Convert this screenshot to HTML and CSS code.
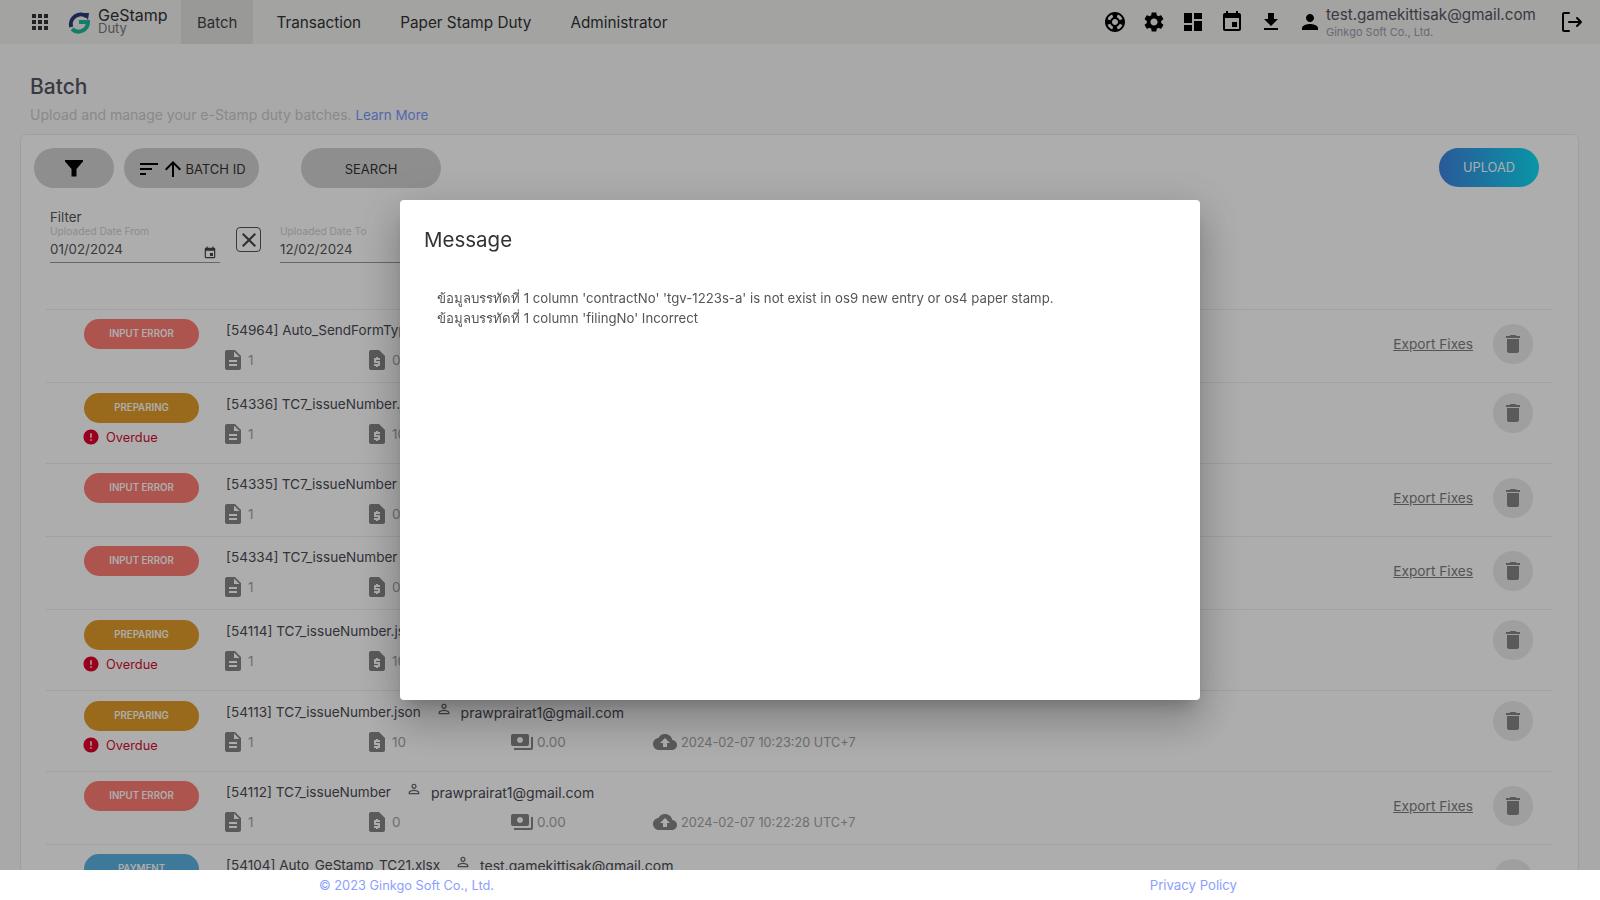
FILE: index.html
```html
<!DOCTYPE html>
<html lang="en">
<head>
  <meta charset="UTF-8">
  <meta name="viewport" content="width=device-width, initial-scale=1.0">
  <title>GeStamp Duty | Batch</title>
  <link rel="stylesheet" href="styles.css">
</head>
<body>
  <!-- material icon sprite -->
  <svg class="sprite" xmlns="http://www.w3.org/2000/svg">
    <symbol id="i-apps" viewBox="0 0 24 24"><path d="M4 8h4V4H4v4zm6 12h4v-4h-4v4zm-6 0h4v-4H4v4zm0-6h4v-4H4v4zm6 0h4v-4h-4v4zm6-10v4h4V4h-4zm-6 4h4V4h-4v4zm6 6h4v-4h-4v4zm0 6h4v-4h-4v4z"/></symbol>
    <symbol id="i-support" viewBox="0 0 24 24"><path d="M12 2C6.48 2 2 6.48 2 12s4.48 10 10 10 10-4.48 10-10S17.52 2 12 2zm7.46 7.12l-2.78 1.15c-.51-1.36-1.58-2.44-2.95-2.94l1.15-2.78c2.1.8 3.77 2.47 4.58 4.57zM12 15c-1.66 0-3-1.34-3-3s1.34-3 3-3 3 1.34 3 3-1.34 3-3 3zM9.13 4.54l1.17 2.78c-1.38.5-2.47 1.59-2.98 2.97L4.54 9.13c.81-2.11 2.48-3.78 4.59-4.59zM4.54 14.87l2.78-1.15c.51 1.38 1.59 2.46 2.97 2.96l-1.17 2.78c-2.1-.81-3.77-2.48-4.58-4.59zm10.34 4.59l-1.15-2.78c1.37-.51 2.45-1.59 2.95-2.97l2.78 1.17c-.81 2.1-2.48 3.77-4.58 4.58z"/></symbol>
    <symbol id="i-settings" viewBox="0 0 24 24"><path d="M19.14 12.94c.04-.3.06-.61.06-.94 0-.32-.02-.64-.07-.94l2.03-1.58c.18-.14.23-.41.12-.61l-1.92-3.32c-.12-.22-.37-.29-.59-.22l-2.39.96c-.5-.38-1.03-.7-1.62-.94l-.36-2.54c-.04-.24-.24-.41-.48-.41h-3.84c-.24 0-.43.17-.47.41l-.36 2.54c-.59.24-1.13.57-1.62.94l-2.39-.96c-.22-.08-.47 0-.59.22L2.74 8.87c-.12.21-.08.47.12.61l2.03 1.58c-.05.3-.09.63-.09.94s.02.64.07.94l-2.03 1.58c-.18.14-.23.41-.12.61l1.92 3.32c.12.22.37.29.59.22l2.39-.96c.5.38 1.03.7 1.62.94l.36 2.54c.05.24.24.41.48.41h3.84c.24 0 .44-.17.47-.41l.36-2.54c.59-.24 1.13-.56 1.62-.94l2.39.96c.22.08.47 0 .59-.22l1.92-3.32c.12-.22.07-.47-.12-.61l-2.01-1.58zM12 15.6c-1.98 0-3.6-1.62-3.6-3.6s1.62-3.6 3.6-3.6 3.6 1.62 3.6 3.6-1.62 3.6-3.6 3.6z"/></symbol>
    <symbol id="i-dashboard" viewBox="0 0 24 24"><path d="M3 13h8V3H3v10zm0 8h8v-6H3v6zm10 0h8V11h-8v10zm0-18v6h8V3h-8z"/></symbol>
    <symbol id="i-event" viewBox="0 0 24 24"><path d="M17 12h-5v5h5v-5zM16 1v2H8V1H6v2H5c-1.11 0-1.99.9-1.99 2L3 19c0 1.1.89 2 2 2h14c1.1 0 2-.9 2-2V5c0-1.1-.9-2-2-2h-1V1h-2zm3 18H5V8h14v11z"/></symbol>
    <symbol id="i-download" viewBox="0 0 24 24"><path d="M19 9h-4V3H9v6H5l7 7 7-7zM5 18v2h14v-2H5z"/></symbol>
    <symbol id="i-person" viewBox="0 0 24 24"><path d="M12 12c2.21 0 4-1.79 4-4s-1.79-4-4-4-4 1.79-4 4 1.79 4 4 4zm0 2c-2.67 0-8 1.34-8 4v2h16v-2c0-2.66-5.33-4-8-4z"/></symbol>
    <symbol id="i-person-outline" viewBox="0 0 24 24"><path d="M12 5.9c1.16 0 2.1.94 2.1 2.1s-.94 2.1-2.1 2.1S9.9 9.16 9.9 8s.94-2.1 2.1-2.1m0 9c2.97 0 6.1 1.46 6.1 2.1v1.1H5.9V17c0-.64 3.13-2.1 6.1-2.1M12 4C9.79 4 8 5.79 8 8s1.79 4 4 4 4-1.79 4-4-1.79-4-4-4zm0 9c-2.67 0-8 1.34-8 4v3h16v-3c0-2.66-5.33-4-8-4z"/></symbol>
    <symbol id="i-filter" viewBox="0 0 24 24"><path d="M3 4h18v1.5L14.5 13v7.5h-5V13L3 5.5z"/></symbol>
    <symbol id="i-sort" viewBox="0 0 24 24"><path d="M3 18h6v-2H3v2zM3 6v2h18V6H3zm0 7h12v-2H3v2z"/></symbol>
    <symbol id="i-arrow-up" viewBox="0 0 24 24"><path d="M4 12l1.41 1.41L11 7.83V20h2V7.83l5.58 5.59L20 12l-8-8-8 8z"/></symbol>
    <symbol id="i-close" viewBox="0 0 24 24"><path d="M19 6.41L17.59 5 12 10.59 6.41 5 5 6.41 10.59 12 5 17.59 6.41 19 12 13.41 17.59 19 19 17.59 13.41 12z"/></symbol>
    <symbol id="i-file" viewBox="0 0 24 24"><path d="M14 2H6c-1.1 0-1.99.9-1.99 2L4 20c0 1.1.89 2 1.99 2H18c1.1 0 2-.9 2-2V8l-6-6zm2 16H8v-2h8v2zm0-4H8v-2h8v2zm-3-5V3.5L18.5 9H13z"/></symbol>
    <symbol id="i-quote" viewBox="0 0 24 24"><path d="M14 2H6c-1.1 0-2 .9-2 2v16c0 1.1.9 2 2 2h12c1.1 0 2-.9 2-2V8l-6-6zm1 10h-4v1h3c.55 0 1 .45 1 1v3c0 .55-.45 1-1 1h-1v1h-2v-1H9v-2h4v-1h-3c-.55 0-1-.45-1-1v-3c0-.55.45-1 1-1h1V9h2v1h2v2z"/></symbol>
    <symbol id="i-payments" viewBox="0 0 24 24"><path d="M19 14V6c0-1.1-.9-2-2-2H3c-1.1 0-2 .9-2 2v8c0 1.1.9 2 2 2h14c1.1 0 2-.9 2-2zm-9-1c-1.66 0-3-1.34-3-3s1.34-3 3-3 3 1.34 3 3-1.34 3-3 3zm13-6v11c0 1.1-.9 2-2 2H4v-2h17V7h2z"/></symbol>
    <symbol id="i-cloud" viewBox="0 0 24 24"><path d="M19.35 10.04C18.67 6.59 15.64 4 12 4 9.11 4 6.6 5.64 5.35 8.04 2.34 8.36 0 10.91 0 14c0 3.31 2.69 6 6 6h13c2.76 0 5-2.24 5-5 0-2.64-2.05-4.78-4.65-4.96zM14 13v4h-4v-4H7l5-5 5 5h-3z"/></symbol>
    <symbol id="i-delete" viewBox="0 0 24 24"><path d="M6 19c0 1.1.9 2 2 2h8c1.1 0 2-.9 2-2V7H6v12zM19 4h-3.5l-1-1h-5l-1 1H5v2h14V4z"/></symbol>
    <symbol id="i-error" viewBox="0 0 24 24"><path d="M12 2C6.48 2 2 6.48 2 12s4.48 10 10 10 10-4.48 10-10S17.52 2 12 2zm1 15h-2v-2h2v2zm0-4h-2V7h2v6z"/></symbol>
  </svg>

  <header class="navbar">
    <svg class="navbar__apps"><use href="#i-apps"/></svg>
    <div class="logo">
      <svg class="logo__mark" viewBox="0 0 24 24" fill="none">
        <path d="M20 6.5A10 10 0 0 0 4.2 17" stroke="#2b3a78" stroke-width="4"/>
        <path d="M16 3l6 0-1 7z" fill="#2b3a78"/>
        <path d="M12 12h9a9.5 9.5 0 0 1-16 7" stroke="#1fb79b" stroke-width="4"/>
      </svg>
      <div class="logo__text">
        <div class="logo__name">GeStamp</div>
        <div class="logo__sub">Duty</div>
      </div>
    </div>
    <nav class="navbar__menu">
      <a class="navbar__link navbar__link--active" href="#">Batch</a>
      <a class="navbar__link" href="#">Transaction</a>
      <a class="navbar__link" href="#">Paper Stamp Duty</a>
      <a class="navbar__link" href="#">Administrator</a>
    </nav>
    <div class="navbar__tools">
      <svg class="navbar__icon"><use href="#i-support"/></svg>
      <svg class="navbar__icon"><use href="#i-settings"/></svg>
      <svg class="navbar__icon"><use href="#i-dashboard"/></svg>
      <svg class="navbar__icon"><use href="#i-event"/></svg>
      <svg class="navbar__icon"><use href="#i-download"/></svg>
      <svg class="navbar__icon"><use href="#i-person"/></svg>
    </div>
    <div class="account">
      <div class="account__email">test.gamekittisak@gmail.com</div>
      <div class="account__company">Ginkgo Soft Co., Ltd.</div>
    </div>
    <svg class="navbar__logout" viewBox="0 0 24 24" fill="none" stroke="#000" stroke-width="2" stroke-linecap="round" stroke-linejoin="round">
      <path d="M10 3H5a1 1 0 0 0-1 1v16a1 1 0 0 0 1 1h5"/>
      <path d="M10 12h12M18 8l4 4-4 4"/>
    </svg>
  </header>

  <main class="page">
    <h1 class="page__title">Batch</h1>
    <p class="page__subtitle">Upload and manage your e-Stamp duty batches. <a class="page__learn" href="#">Learn More</a></p>

    <section class="card">
      <div class="toolbar">
        <button class="pill pill--filter"><svg class="pill__filter-icon"><use href="#i-filter"/></svg></button>
        <button class="pill pill--sort">
          <svg class="pill__icon"><use href="#i-sort"/></svg>
          <svg class="pill__icon pill__icon--arrow"><use href="#i-arrow-up"/></svg>
          BATCH ID
        </button>
        <button class="pill pill--search">SEARCH</button>
        <button class="upload">UPLOAD</button>
      </div>

      <div class="filter">
        <div class="filter__title">Filter</div>
        <div class="filter__fields">
          <div class="date-field">
            <div class="date-field__label">Uploaded Date From</div>
            <div class="date-field__value">01/02/2024 <svg class="date-field__icon"><use href="#i-event"/></svg></div>
          </div>
          <button class="clear-date"><svg class="clear-date__icon"><use href="#i-close"/></svg></button>
          <div class="date-field">
            <div class="date-field__label">Uploaded Date To</div>
            <div class="date-field__value">12/02/2024 <svg class="date-field__icon"><use href="#i-event"/></svg></div>
          </div>
        </div>
      </div>

      <div class="batch-list">
        <div class="batch">
          <div class="batch__status"><span class="chip chip--error">INPUT ERROR</span></div>
          <div class="batch__body">
            <div class="batch__head"><span class="batch__name">[54964] Auto_SendFormType.xlsx</span> <svg class="batch__user"><use href="#i-person-outline"/></svg> test.gamekittisak@gmail.com</div>
            <div class="stats">
              <div class="stat"><svg class="stat__icon"><use href="#i-file"/></svg>1</div>
              <div class="stat"><svg class="stat__icon"><use href="#i-quote"/></svg>0</div>
              <div class="stat"><svg class="stat__icon stat__icon--wide"><use href="#i-payments"/></svg>0.00</div>
              <div class="stat stat--date"><svg class="stat__icon stat__icon--wide"><use href="#i-cloud"/></svg>2024-02-12 10:00:00 UTC+7</div>
            </div>
          </div>
          <div class="batch__actions">
            <a class="batch__export" href="#">Export Fixes</a>
            <button class="trash"><svg class="trash__icon"><use href="#i-delete"/></svg></button>
          </div>
        </div>

        <div class="batch batch--overdue">
          <div class="batch__status">
            <span class="chip chip--preparing">PREPARING</span>
            <div class="overdue"><svg class="overdue__icon"><use href="#i-error"/></svg>Overdue</div>
          </div>
          <div class="batch__body">
            <div class="batch__head"><span class="batch__name">[54336] TC7_issueNumber.json</span> <svg class="batch__user"><use href="#i-person-outline"/></svg> prawprairat1@gmail.com</div>
            <div class="stats">
              <div class="stat"><svg class="stat__icon"><use href="#i-file"/></svg>1</div>
              <div class="stat"><svg class="stat__icon"><use href="#i-quote"/></svg>10</div>
              <div class="stat"><svg class="stat__icon stat__icon--wide"><use href="#i-payments"/></svg>0.00</div>
              <div class="stat stat--date"><svg class="stat__icon stat__icon--wide"><use href="#i-cloud"/></svg>2024-02-09 10:00:00 UTC+7</div>
            </div>
          </div>
          <div class="batch__actions">
            <button class="trash"><svg class="trash__icon"><use href="#i-delete"/></svg></button>
          </div>
        </div>

        <div class="batch">
          <div class="batch__status"><span class="chip chip--error">INPUT ERROR</span></div>
          <div class="batch__body">
            <div class="batch__head"><span class="batch__name">[54335] TC7_issueNumber</span> <svg class="batch__user"><use href="#i-person-outline"/></svg> prawprairat1@gmail.com</div>
            <div class="stats">
              <div class="stat"><svg class="stat__icon"><use href="#i-file"/></svg>1</div>
              <div class="stat"><svg class="stat__icon"><use href="#i-quote"/></svg>0</div>
              <div class="stat"><svg class="stat__icon stat__icon--wide"><use href="#i-payments"/></svg>0.00</div>
              <div class="stat stat--date"><svg class="stat__icon stat__icon--wide"><use href="#i-cloud"/></svg>2024-02-09 10:00:00 UTC+7</div>
            </div>
          </div>
          <div class="batch__actions">
            <a class="batch__export" href="#">Export Fixes</a>
            <button class="trash"><svg class="trash__icon"><use href="#i-delete"/></svg></button>
          </div>
        </div>

        <div class="batch">
          <div class="batch__status"><span class="chip chip--error">INPUT ERROR</span></div>
          <div class="batch__body">
            <div class="batch__head"><span class="batch__name">[54334] TC7_issueNumber</span> <svg class="batch__user"><use href="#i-person-outline"/></svg> prawprairat1@gmail.com</div>
            <div class="stats">
              <div class="stat"><svg class="stat__icon"><use href="#i-file"/></svg>1</div>
              <div class="stat"><svg class="stat__icon"><use href="#i-quote"/></svg>0</div>
              <div class="stat"><svg class="stat__icon stat__icon--wide"><use href="#i-payments"/></svg>0.00</div>
              <div class="stat stat--date"><svg class="stat__icon stat__icon--wide"><use href="#i-cloud"/></svg>2024-02-09 10:00:00 UTC+7</div>
            </div>
          </div>
          <div class="batch__actions">
            <a class="batch__export" href="#">Export Fixes</a>
            <button class="trash"><svg class="trash__icon"><use href="#i-delete"/></svg></button>
          </div>
        </div>

        <div class="batch batch--overdue">
          <div class="batch__status">
            <span class="chip chip--preparing">PREPARING</span>
            <div class="overdue"><svg class="overdue__icon"><use href="#i-error"/></svg>Overdue</div>
          </div>
          <div class="batch__body">
            <div class="batch__head"><span class="batch__name">[54114] TC7_issueNumber.json</span> <svg class="batch__user"><use href="#i-person-outline"/></svg> prawprairat1@gmail.com</div>
            <div class="stats">
              <div class="stat"><svg class="stat__icon"><use href="#i-file"/></svg>1</div>
              <div class="stat"><svg class="stat__icon"><use href="#i-quote"/></svg>10</div>
              <div class="stat"><svg class="stat__icon stat__icon--wide"><use href="#i-payments"/></svg>0.00</div>
              <div class="stat stat--date"><svg class="stat__icon stat__icon--wide"><use href="#i-cloud"/></svg>2024-02-07 10:30:00 UTC+7</div>
            </div>
          </div>
          <div class="batch__actions">
            <button class="trash"><svg class="trash__icon"><use href="#i-delete"/></svg></button>
          </div>
        </div>

        <div class="batch batch--overdue">
          <div class="batch__status">
            <span class="chip chip--preparing">PREPARING</span>
            <div class="overdue"><svg class="overdue__icon"><use href="#i-error"/></svg>Overdue</div>
          </div>
          <div class="batch__body">
            <div class="batch__head"><span class="batch__name">[54113] TC7_issueNumber.json</span> <svg class="batch__user"><use href="#i-person-outline"/></svg> prawprairat1@gmail.com</div>
            <div class="stats">
              <div class="stat"><svg class="stat__icon"><use href="#i-file"/></svg>1</div>
              <div class="stat"><svg class="stat__icon"><use href="#i-quote"/></svg>10</div>
              <div class="stat"><svg class="stat__icon stat__icon--wide"><use href="#i-payments"/></svg>0.00</div>
              <div class="stat stat--date"><svg class="stat__icon stat__icon--wide"><use href="#i-cloud"/></svg>2024-02-07 10:23:20 UTC+7</div>
            </div>
          </div>
          <div class="batch__actions">
            <button class="trash"><svg class="trash__icon"><use href="#i-delete"/></svg></button>
          </div>
        </div>

        <div class="batch">
          <div class="batch__status"><span class="chip chip--error">INPUT ERROR</span></div>
          <div class="batch__body">
            <div class="batch__head"><span class="batch__name">[54112] TC7_issueNumber</span> <svg class="batch__user"><use href="#i-person-outline"/></svg> prawprairat1@gmail.com</div>
            <div class="stats">
              <div class="stat"><svg class="stat__icon"><use href="#i-file"/></svg>1</div>
              <div class="stat"><svg class="stat__icon"><use href="#i-quote"/></svg>0</div>
              <div class="stat"><svg class="stat__icon stat__icon--wide"><use href="#i-payments"/></svg>0.00</div>
              <div class="stat stat--date"><svg class="stat__icon stat__icon--wide"><use href="#i-cloud"/></svg>2024-02-07 10:22:28 UTC+7</div>
            </div>
          </div>
          <div class="batch__actions">
            <a class="batch__export" href="#">Export Fixes</a>
            <button class="trash"><svg class="trash__icon"><use href="#i-delete"/></svg></button>
          </div>
        </div>

        <div class="batch">
          <div class="batch__status"><span class="chip chip--payment">PAYMENT</span></div>
          <div class="batch__body">
            <div class="batch__head"><span class="batch__name">[54104] Auto_GeStamp_TC21.xlsx</span> <svg class="batch__user"><use href="#i-person-outline"/></svg> test.gamekittisak@gmail.com</div>
          </div>
          <div class="batch__actions">
            <button class="trash"><svg class="trash__icon"><use href="#i-delete"/></svg></button>
          </div>
        </div>
      </div>
    </section>
  </main>

  <footer class="footer">
    <span class="footer__copy">© 2023 Ginkgo Soft Co., Ltd.</span>
    <a class="footer__link" href="#">Privacy Policy</a>
  </footer>

  <div class="backdrop">
    <div class="dialog">
      <h2 class="dialog__title">Message</h2>
      <div class="dialog__body">
        <div>ข้อมูลบรรทัดที่ 1 column 'contractNo' 'tgv-1223s-a' is not exist in os9 new entry or os4 paper stamp.</div>
        <div>ข้อมูลบรรทัดที่ 1 column 'filingNo' Incorrect</div>
      </div>
    </div>
  </div>
</body>
</html>
```

FILE: styles.css
```css
:root {
  --clr-text: #4a4a55;
  --clr-muted: #a3a3a3;
  --clr-icon: #858585;
  --clr-line: #eeeeee;
  --clr-blue: #8c9eff;

  font-family: Inter, "Noto Sans", "DejaVu Sans", sans-serif;
  font-size: 14px;
}

* {
  box-sizing: border-box;
}

html,
body {
  height: 100%;
}

body {
  margin: 0;
  display: flex;
  flex-direction: column;
  overflow: hidden;
  background: #f9f9f9;
  color: var(--clr-text);
}

a {
  text-decoration: none;
}

button {
  font-family: inherit;
  border: 0;
  padding: 0;
  cursor: pointer;
}

.sprite {
  display: none;
}

/* navbar */
.navbar {
  flex: 0 0 44px;
  display: flex;
  align-items: center;
  background: #f0f0ef;
}

.navbar__apps {
  width: 24px;
  height: 24px;
  margin-left: 28px;
  fill: #333;
}

.logo {
  display: flex;
  align-items: center;
  gap: 7px;
  margin-left: 15px;
  width: 114px;
}

.logo__mark {
  width: 24px;
  height: 24px;
}

.logo__text {
  padding-bottom: 3px;
}

.logo__name {
  font-size: 16px;
  line-height: 14px;
  color: #333;
}

.logo__sub {
  font-size: 13px;
  line-height: 12px;
  color: #777;
}

.navbar__menu {
  display: flex;
  align-self: stretch;
  gap: 7px;
}

.navbar__link {
  display: flex;
  align-items: center;
  padding: 0 16px;
  font-size: 15.3px;
  color: #333;
}

.navbar__link--active {
  background: #e2e2e1;
  color: #444;
  font-size: 15px;
}

.navbar__tools {
  display: flex;
  gap: 15px;
  margin-left: auto;
}

.navbar__icon {
  width: 24px;
  height: 24px;
}

.account {
  margin-left: 4px;
  width: 233px;
}

.account__email {
  font-size: 15.2px;
  line-height: 20px;
  color: #555560;
}

.account__company {
  font-size: 11px;
  line-height: 14px;
  color: #9c9ca8;
}

.navbar__logout {
  width: 24px;
  height: 24px;
  margin-right: 17px;
}

/* page */
.page {
  flex: 1 1 auto;
  min-height: 0;
  padding: 28px 21px 0 20px;
  overflow: hidden;
}

.page__title {
  margin: 0 0 0 10px;
  font-size: 21px;
  line-height: 30px;
  font-weight: 500;
  color: #555562;
}

.page__subtitle {
  margin: 3px 0 9px 10px;
  font-size: 14px;
  line-height: 20px;
  color: #cbcbcb;
}

.page__learn {
  color: #7699ff;
  font-size: 13.4px;
}

.card {
  background: #fff;
  border: 1px solid #ebebeb;
  border-radius: 6px;
  padding-top: 13px;
}

.toolbar {
  display: flex;
  align-items: flex-start;
  padding: 0 39px 0 13px;
}

.pill {
  height: 40px;
  border-radius: 20px;
  background: #d2d2d2;
  color: #333;
  font-size: 13px;
  display: flex;
  align-items: center;
  justify-content: center;
}

.pill--filter {
  width: 80px;
}

.pill--sort {
  width: 135px;
  margin-left: 10px;
  padding-top: 2px;
}

.pill--search {
  width: 140px;
  margin-left: 42px;
  padding-top: 2px;
}

.pill__filter-icon {
  width: 24px;
  height: 24px;
}

.pill__icon {
  width: 24px;
  height: 24px;
}

.pill__icon--arrow {
  margin-left: 0;
}

.upload {
  margin-left: auto;
  width: 100px;
  height: 39px;
  border-radius: 20px;
  background: linear-gradient(90deg, #3e84e2, #0fdcf5);
  color: #fff;
  font-size: 12.8px;
}

.filter {
  padding: 21px 0 0 29px;
}

.filter__title {
  font-size: 13.3px;
  line-height: 16px;
  color: #555;
}

.filter__fields {
  display: flex;
  align-items: flex-start;
}

.date-field {
  width: 170px;
  border-bottom: 1px solid #999;
  height: 38px;
}

.date-field__label {
  font-size: 10.2px;
  line-height: 12px;
  color: #cfcfcf;
}

.date-field__value {
  position: relative;
  font-size: 13.3px;
  line-height: 24px;
  color: #555;
}

.date-field__icon {
  position: absolute;
  right: 3px;
  top: 9px;
  width: 14px;
  height: 14px;
  fill: #444;
}

.clear-date {
  display: flex;
  align-items: center;
  justify-content: center;
  width: 25px;
  height: 25px;
  margin: 2px 19px 0 16px;
  border: 1.5px solid #555;
  border-radius: 4px;
  background: #fff;
}

.clear-date__icon {
  width: 24px;
  height: 24px;
  flex: none;
  fill: #444;
}

.batch-list {
  margin: 46px 25px 0 25px;
}

.batch {
  display: flex;
  align-items: flex-start;
  height: 73px;
  border-top: 1px solid var(--clr-line);
  padding-top: 9px;
}

.batch--overdue {
  height: 81px;
  padding-top: 10px;
}

.batch__status {
  width: 180px;
  padding-left: 38px;
  flex: none;
}

.chip {
  display: block;
  width: 115px;
  height: 30px;
  border-radius: 15px;
  text-align: center;
  font-size: 9.7px;
  line-height: 30px;
  font-weight: 600;
  color: #fff;
}

.chip--error {
  background: #ff7c74;
}

.chip--preparing {
  background: #e29c29;
}

.chip--payment {
  background: #5db3e2;
}

.overdue {
  display: flex;
  align-items: center;
  margin: 5px 0 0 -1px;
  height: 18px;
  font-size: 12.8px;
  color: #d30f2e;
}

.overdue__icon {
  width: 18px;
  height: 18px;
  margin: 0 6px 0 -1px;
  fill: #e00029;
}

.batch__body {
  flex: 1 1 auto;
  min-width: 0;
}

.batch__head {
  display: flex;
  align-items: center;
  height: 20px;
  margin-top: 1px;
  font-size: 14px;
  white-space: pre;
}

.batch__name {
  font-size: 13.55px;
}

.batch__user {
  width: 16px;
  height: 16px;
  margin: -6px 5px 0 15px;
  fill: #666;
}

.stats {
  display: grid;
  grid-template-columns: 144px 141px 143px auto;
  margin: 8px 0 0 -1px;
  color: #a3a3a3;
}

.stat {
  display: flex;
  align-items: center;
  gap: 3px;
  height: 24px;
  font-size: 13.5px;
}

.stat--date {
  font-size: 12.7px;
  gap: 4px;
}

.stat__icon {
  width: 24px;
  height: 24px;
  margin-left: -4px;
  fill: var(--clr-icon);
}

.stat__icon--wide {
  margin-left: 0;
}

.batch__actions {
  display: flex;
  align-items: center;
  flex: none;
  margin: 5px 20px 0 0;
}

.batch--overdue .batch__actions {
  margin-top: 0;
}

.batch__export {
  margin-right: 20px;
  font-size: 13.7px;
  color: #7d7d7d;
  text-decoration: underline;
}

.trash {
  width: 40px;
  height: 40px;
  border-radius: 50%;
  background: #eaeaea;
  display: flex;
  align-items: center;
  justify-content: center;
}

.trash__icon {
  width: 24px;
  height: 24px;
  fill: #858585;
}

/* footer sits above the dialog backdrop */
.footer {
  flex: 0 0 30px;
  position: relative;
  z-index: 2;
  display: flex;
  align-items: center;
  justify-content: space-between;
  padding: 0 363px 0 319px;
  background: #fff;
  color: var(--clr-blue);
  font-size: 13.2px;
}

.footer__copy {
  font-size: 12.8px;
}

.footer__link {
  color: var(--clr-blue);
}

/* dialog */
.backdrop {
  position: fixed;
  inset: 0;
  z-index: 1;
  display: flex;
  align-items: center;
  justify-content: center;
  background: rgba(0, 0, 0, 0.32);
}

.dialog {
  width: 800px;
  height: 500px;
  padding: 24px;
  border-radius: 4px;
  background: #fff;
  box-shadow: 0 11px 15px -7px rgba(0, 0, 0, 0.2), 0 24px 38px 3px rgba(0, 0, 0, 0.14), 0 9px 46px 8px rgba(0, 0, 0, 0.12);
}

.dialog__title {
  margin: 0;
  font-size: 20.5px;
  line-height: 32px;
  font-weight: 400;
  color: #333;
}

.dialog__body {
  margin: 32px 0 0 13px;
  font-size: 13.2px;
  line-height: 20px;
  color: #555;
}
```
